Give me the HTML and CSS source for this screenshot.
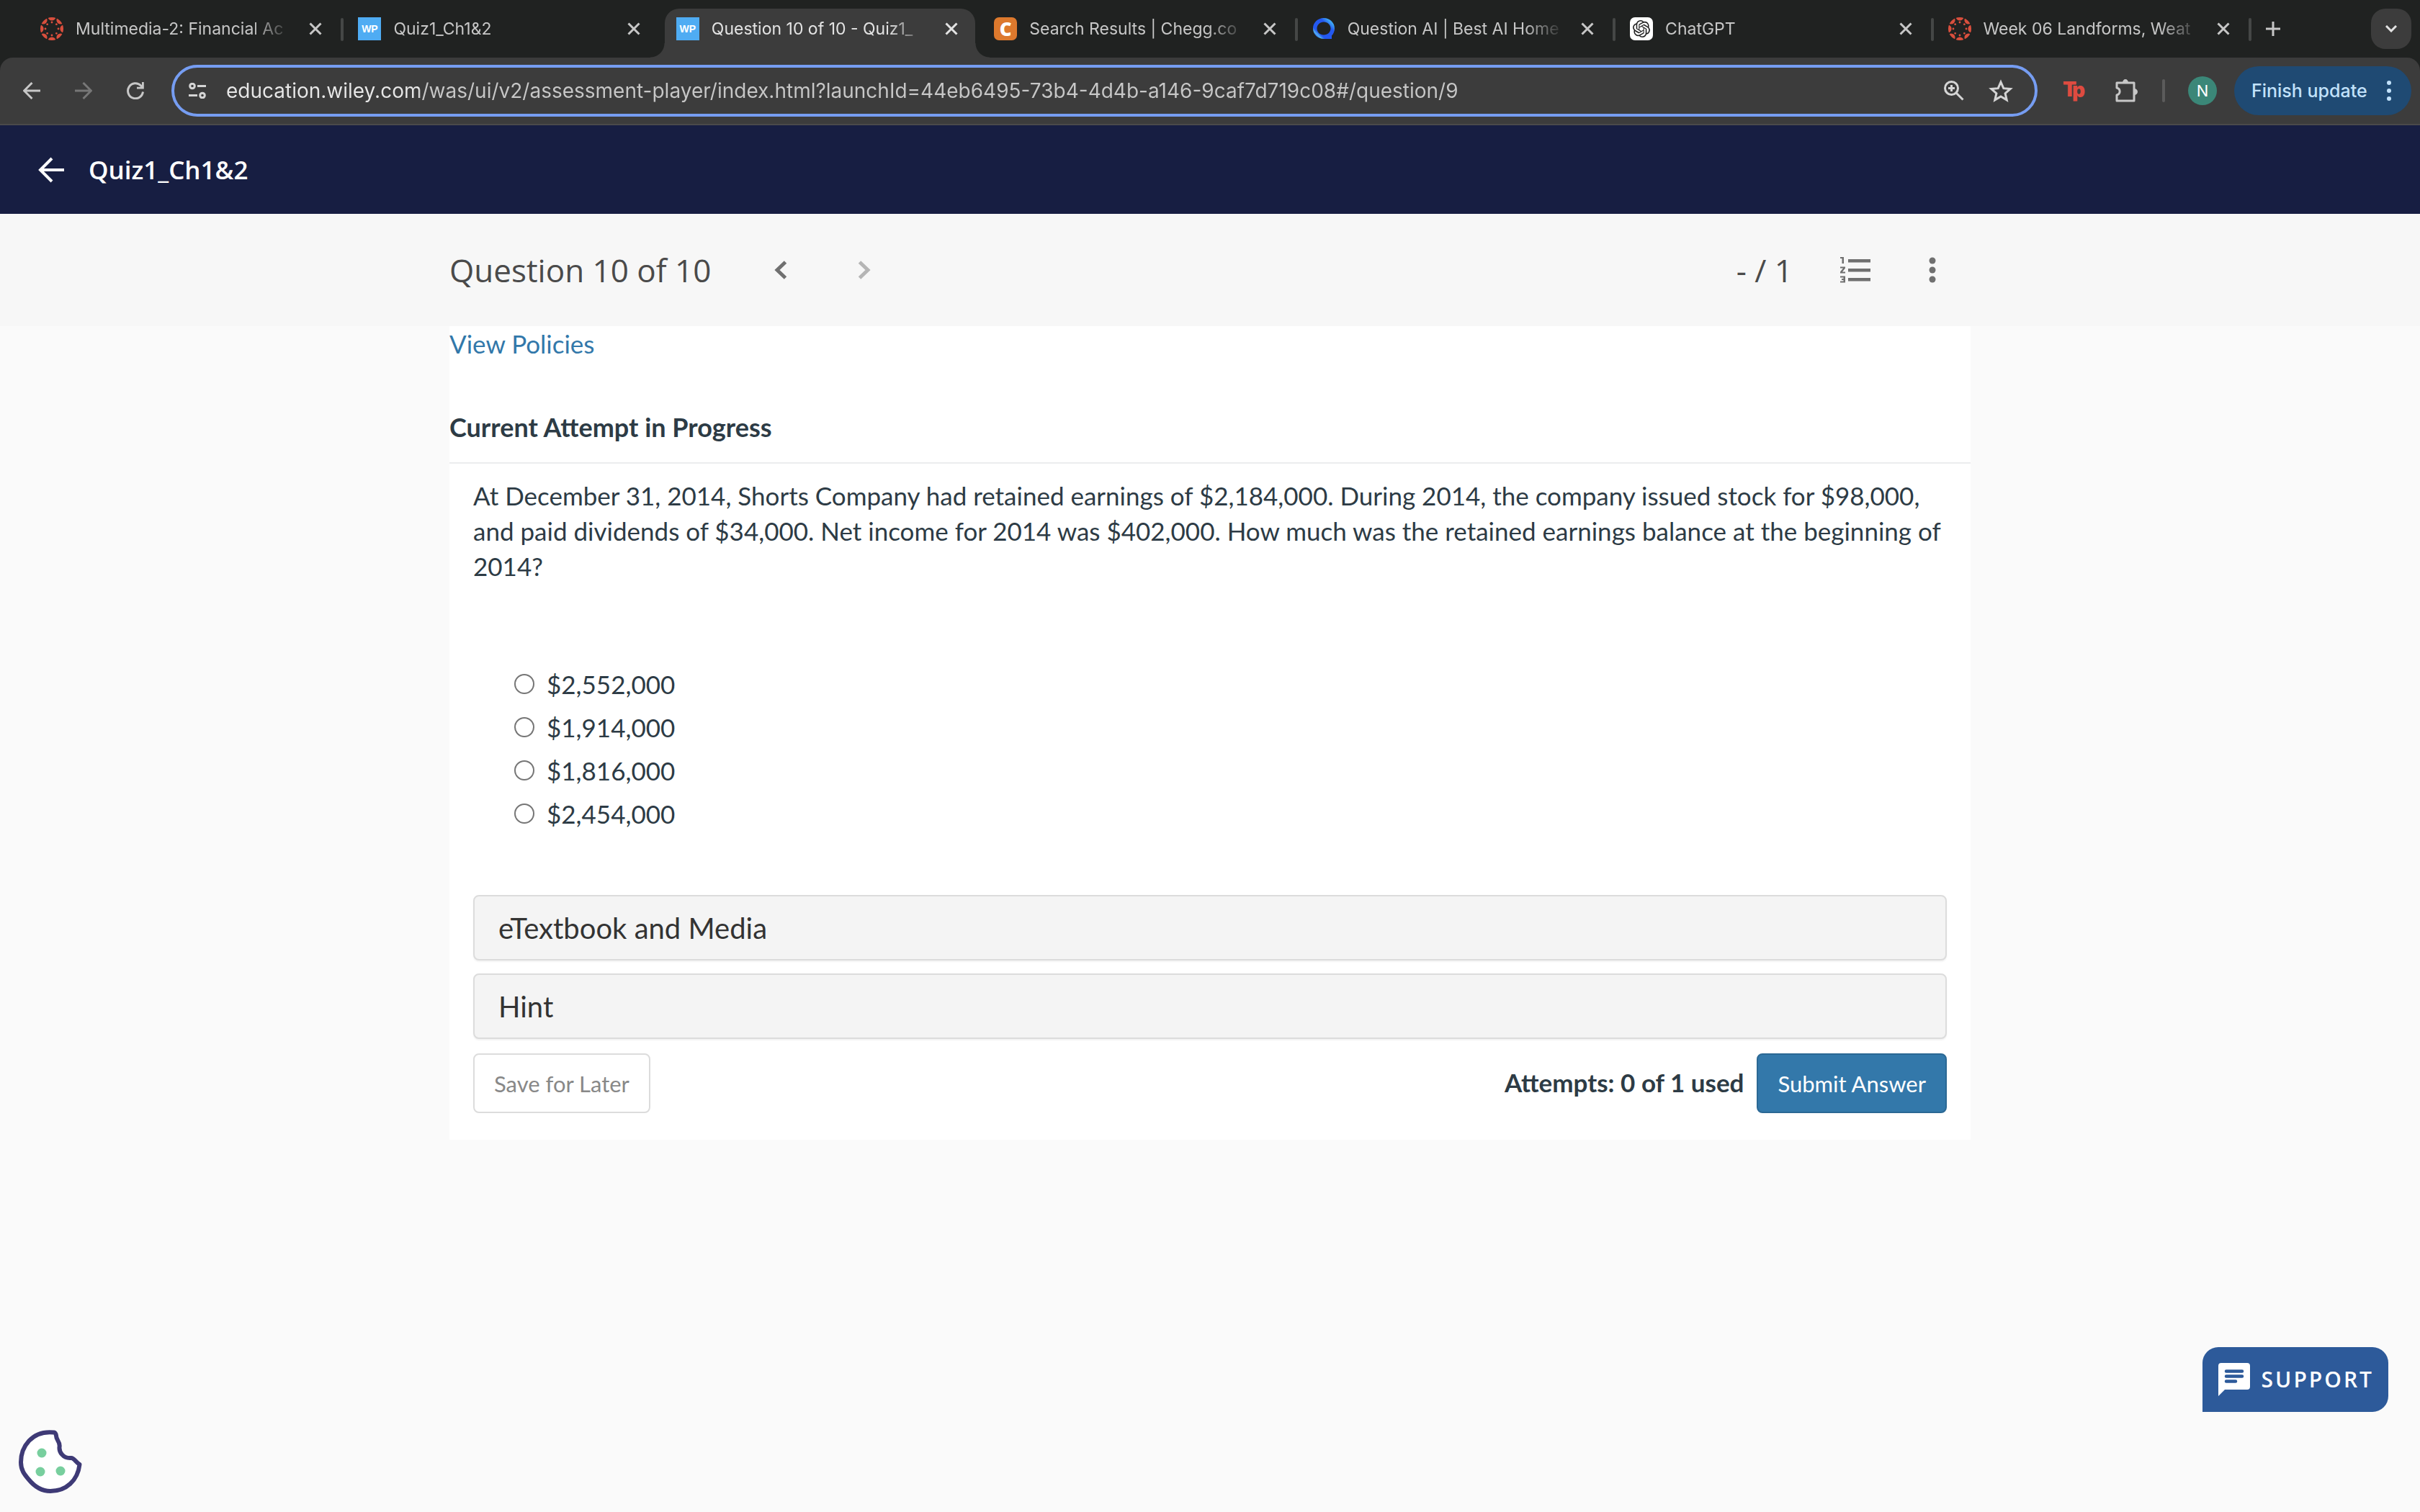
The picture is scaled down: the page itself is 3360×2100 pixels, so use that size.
FILE: index.html
```html
<!DOCTYPE html>
<html lang="en">
<head>
<meta charset="utf-8">
<meta name="viewport" content="width=device-width, initial-scale=1">
<title>Question 10 of 10 - Quiz1_Ch1&amp;2</title>
<link rel="stylesheet" href="styles.css">
</head>
<body>
<svg class="defs" aria-hidden="true">
  <defs>
    <clipPath id="disc"><circle cx="16" cy="16" r="16"/></clipPath>
    <g id="petal"><circle cx="16" cy="-1" r="5.6"/><circle cx="16" cy="7" r="1.4"/></g>
    <symbol id="canvas" viewBox="0 0 32 32">
      <g clip-path="url(#disc)" fill="#d94f3d">
        <use href="#petal"/><use href="#petal" transform="rotate(45 16 16)"/><use href="#petal" transform="rotate(90 16 16)"/><use href="#petal" transform="rotate(135 16 16)"/><use href="#petal" transform="rotate(180 16 16)"/><use href="#petal" transform="rotate(225 16 16)"/><use href="#petal" transform="rotate(270 16 16)"/><use href="#petal" transform="rotate(315 16 16)"/>
      </g>
    </symbol>
    <symbol id="close" viewBox="0 0 24 24"><path d="M4.500 4.500 19.500 19.500M19.500 4.500 4.500 19.500" stroke="currentColor" stroke-width="3" fill="none"/></symbol>
  </defs>
</svg>

<header class="browser">
  <div class="tabstrip">
    <div class="tabs">
      <div class="tab"><svg class="favicon"><use href="#canvas"/></svg><span class="tab-title">Multimedia-2: Financial Ac</span><button class="tab-close" aria-label="Close tab"><svg><use href="#close"/></svg></button></div>
      <div class="tab tab-plain"><span class="favicon favicon-wp">WP</span><span class="tab-title">Quiz1_Ch1&amp;2</span><button class="tab-close" aria-label="Close tab"><svg><use href="#close"/></svg></button></div>
      <div class="tab tab-active"><span class="favicon favicon-wp">WP</span><span class="tab-title">Question 10 of 10 - Quiz1_</span><button class="tab-close" aria-label="Close tab"><svg><use href="#close"/></svg></button></div>
      <div class="tab"><span class="favicon favicon-chegg">C</span><span class="tab-title">Search Results | Chegg.co</span><button class="tab-close" aria-label="Close tab"><svg><use href="#close"/></svg></button></div>
      <div class="tab"><svg class="favicon" viewBox="0 0 32 32"><defs><linearGradient id="qa" x1="0" y1="1" x2="1" y2="0"><stop offset="0" stop-color="#2458f0"/><stop offset=".12" stop-color="#2458f0"/><stop offset=".2" stop-color="#52b0ee"/><stop offset=".28" stop-color="#2458f0"/><stop offset=".66" stop-color="#2458f0"/><stop offset=".82" stop-color="#3fa9f5"/><stop offset="1" stop-color="#2458f0"/></linearGradient></defs><path fill="url(#qa)" fill-rule="evenodd" d="M16 1C7.500 1 1 7.500 1 15.500S7.500 30 16 30H27V25.500C29.500 23 31 19.500 31 15.500 31 7.500 24.500 1 16 1ZM16 6.500C21.500 6.500 25.500 10.500 25.500 15.500S21.500 24.500 16 24.500 6.500 20.500 6.500 15.500 10.500 6.500 16 6.500Z"/></svg><span class="tab-title">Question AI | Best AI Home</span><button class="tab-close" aria-label="Close tab"><svg><use href="#close"/></svg></button></div>
      <div class="tab"><svg class="favicon" viewBox="0 0 32 32"><rect width="32" height="32" rx="7" fill="#fff"/><path fill="#222" transform="translate(4 4)" d="M22.2819 9.8211a5.9847 5.9847 0 0 0-.5157-4.9108 6.0462 6.0462 0 0 0-6.5098-2.9A6.0651 6.0651 0 0 0 4.9807 4.1818a5.9847 5.9847 0 0 0-3.9977 2.9 6.0462 6.0462 0 0 0 .7427 7.0966 5.98 5.98 0 0 0 .511 4.9107 6.051 6.051 0 0 0 6.5146 2.9001A5.9847 5.9847 0 0 0 13.2599 24a6.0557 6.0557 0 0 0 5.7718-4.2058 5.9894 5.9894 0 0 0 3.9977-2.9001 6.0557 6.0557 0 0 0-.7475-7.0729zm-9.022 12.6081a4.4755 4.4755 0 0 1-2.8764-1.0408l.1419-.0804 4.7783-2.7582a.7948.7948 0 0 0 .3927-.6813v-6.7369l2.02 1.1686a.071.071 0 0 1 .038.052v5.5826a4.504 4.504 0 0 1-4.4945 4.4944zm-9.6607-4.1254a4.4708 4.4708 0 0 1-.5346-3.0137l.142.0852 4.783 2.7582a.7712.7712 0 0 0 .7806 0l5.8428-3.3685v2.3324a.0804.0804 0 0 1-.0332.0615L9.74 19.9502a4.4992 4.4992 0 0 1-6.1408-1.6464zM2.3408 7.8956a4.485 4.485 0 0 1 2.3655-1.9728V11.6a.7664.7664 0 0 0 .3879.6765l5.8144 3.3543-2.0201 1.1685a.0757.0757 0 0 1-.071 0l-4.8303-2.7865A4.504 4.504 0 0 1 2.3408 7.872zm16.5963 3.8558L13.1038 8.364 15.1192 7.2a.0757.0757 0 0 1 .071 0l4.8303 2.7913a4.4944 4.4944 0 0 1-.6765 8.1042v-5.6772a.79.79 0 0 0-.407-.667zm2.0107-3.0231l-.142-.0852-4.7735-2.7818a.7759.7759 0 0 0-.7854 0L9.409 9.2297V6.8974a.0662.0662 0 0 1 .0284-.0615l4.8303-2.7866a4.4992 4.4992 0 0 1 6.6802 4.66zM8.3065 12.863l-2.02-1.1638a.0804.0804 0 0 1-.038-.0567V6.0742a4.4992 4.4992 0 0 1 7.3757-3.4537l-.142.0805L8.704 5.459a.7948.7948 0 0 0-.3927.6813zm1.0976-2.3654l2.602-1.4998 2.6069 1.4998v2.9994l-2.5974 1.4997-2.6067-1.4997Z"/></svg><span class="tab-title">ChatGPT</span><button class="tab-close" aria-label="Close tab"><svg><use href="#close"/></svg></button></div>
      <div class="tab"><svg class="favicon"><use href="#canvas"/></svg><span class="tab-title">Week 06 Landforms, Weat</span><button class="tab-close" aria-label="Close tab"><svg><use href="#close"/></svg></button></div>
    </div>
    <button class="icon-button new-tab" aria-label="New tab"><svg width="20" height="20" viewBox="0 0 20 20"><path d="M10 0V20M0 10H20" stroke="currentColor" stroke-width="3"/></svg></button>
    <button class="icon-button tab-search" aria-label="Search tabs"><svg width="16" height="10" viewBox="0 0 16 10"><path d="M1 1 8 8 15 1" stroke="currentColor" stroke-width="3" fill="none"/></svg></button>
  </div>

  <div class="toolbar">
    <div class="nav-buttons">
      <button class="icon-button" aria-label="Back"><svg width="24" height="24" viewBox="0 0 24 24"><path d="M24 12H2M12.500 1 1.500 12 12.500 23" stroke="currentColor" stroke-width="3" fill="none"/></svg></button>
      <button class="icon-button dim" aria-label="Forward"><svg width="24" height="24" viewBox="0 0 24 24"><path d="M0 12H22M11.500 1 22.500 12 11.500 23" stroke="currentColor" stroke-width="3" fill="none"/></svg></button>
      <button class="icon-button" aria-label="Reload"><svg width="24" height="24" viewBox="0 0 24 24"><path d="M22.500 13.500A10.500 10.500 0 1 1 19.500 4.800L22 8" stroke="currentColor" stroke-width="3" fill="none"/><path d="M14 9.500H23.800V0H21V6.700H14Z" fill="currentColor"/></svg></button>
    </div>
    <div class="omnibox">
      <svg width="24" height="22" viewBox="0 0 24 22" aria-hidden="true"><g fill="none" stroke="currentColor" stroke-width="3"><circle cx="5" cy="4.500" r="3.300"/><path d="M12 4.500H24M0 17.500H12"/><circle cx="19" cy="17.500" r="3.300"/></g></svg>
      <input class="url" type="text" aria-label="Address" value="education.wiley.com/was/ui/v2/assessment-player/index.html?launchId=44eb6495-73b4-4d4b-a146-9caf7d719c08#/question/9">
      <button class="icon-button" aria-label="Zoom"><svg width="28" height="28" viewBox="0 0 28 28"><g fill="none" stroke="currentColor" stroke-width="3"><circle cx="10.500" cy="10.500" r="9"/><path d="M10.500 6V15M6 10.500H15M17 17 26.500 26.500"/></g></svg></button>
      <button class="icon-button" aria-label="Bookmark"><svg width="34" height="32" viewBox="0 0 34 32"><path d="M17 4 20.800 12.700 30.200 13.500 23.100 19.700 25.200 28.900 17 24 8.800 28.900 10.900 19.700 3.800 13.500 13.200 12.700Z" fill="none" stroke="currentColor" stroke-width="3"/></svg></button>
    </div>
    <div class="extensions">
      <button class="icon-button" aria-label="Tp extension"><svg width="32" height="32" viewBox="0 0 32 32" class="tp"><text x="0" y="24">T</text><text x="13" y="25">p</text></svg></button>
      <button class="icon-button" aria-label="Extensions"><svg width="32" height="34" viewBox="0 0 32 34"><path d="M2 6H26V31H2V23C7.500 21.500 7.500 14.500 2 13Z" fill="none" stroke="currentColor" stroke-width="3" stroke-linejoin="round"/><path d="M10 6A4 5 0 0 1 18 6ZM26 14A5 4.500 0 0 1 26 23Z" fill="currentColor"/></svg></button>
      <span class="divider"></span>
      <button class="avatar" aria-label="Profile">N</button>
      <button class="update"><span>Finish update</span><svg width="6" height="30" viewBox="0 0 6 30"><g fill="currentColor"><circle cx="3" cy="4" r="3"/><circle cx="3" cy="15" r="3"/><circle cx="3" cy="26" r="3"/></g></svg></button>
    </div>
  </div>
</header>

<div class="course-bar">
  <a class="course-back" href="#" aria-label="Back to course"><svg width="36" height="36" viewBox="0 0 36 36"><path d="M36 18H4M19 2 3 18 19 34" stroke="currentColor" stroke-width="4" fill="none"/></svg></a>
  <h1 class="course-title">Quiz1_Ch1&amp;2</h1>
</div>

<div class="question-bar">
  <div class="question-bar-inner">
    <h2 class="question-title">Question 10 of 10</h2>
    <button class="icon-button step" aria-label="Previous question"><svg width="18" height="26" viewBox="0 0 18 26"><path d="M15.500 2 4 13 15.500 24" stroke="currentColor" stroke-width="5" fill="none"/></svg></button>
    <button class="icon-button step step-off" aria-label="Next question"><svg width="18" height="26" viewBox="0 0 18 26"><path d="M2.500 2 14 13 2.500 24" stroke="currentColor" stroke-width="5" fill="none"/></svg></button>
    <span class="score">- / 1</span>
    <button class="icon-button list-button" aria-label="Question list"><svg width="44" height="36" viewBox="0 0 44 36"><path d="M12 3H43V7.500H12ZM12 16H43V20.500H12ZM12 29H43V33.500H12ZM1 0H6V9H3.500V2H1ZM1 13.500H8V15.500L4 20.500H8V22.500H1V20.500L5 15.500H1ZM1 26.500H8V35.500H1V33.500H5.500V32H3V30H5.500V28.500H1Z" fill="currentColor"/></svg></button>
    <button class="icon-button" aria-label="More options"><svg width="10" height="36" viewBox="0 0 10 36"><g fill="currentColor"><circle cx="5" cy="5" r="4.500"/><circle cx="5" cy="18" r="4.500"/><circle cx="5" cy="31" r="4.500"/></g></svg></button>
  </div>
</div>

<main class="card">
  <a class="policies" href="#">View Policies</a>
  <h3 class="attempt-title">Current Attempt in Progress</h3>
  <form class="question">
    <p class="prompt" id="prompt">At December 31, 2014, Shorts Company had retained earnings of $2,184,000. During 2014, the company issued stock for $98,000, and paid dividends of $34,000. Net income for 2014 was $402,000. How much was the retained earnings balance at the beginning of 2014?</p>
    <div class="choices" role="radiogroup" aria-labelledby="prompt">
      <label class="choice"><input type="radio" name="answer">$2,552,000</label>
      <label class="choice"><input type="radio" name="answer">$1,914,000</label>
      <label class="choice"><input type="radio" name="answer">$1,816,000</label>
      <label class="choice"><input type="radio" name="answer">$2,454,000</label>
    </div>
    <div class="resources">
      <button class="resource" type="button">eTextbook and Media</button>
      <button class="resource" type="button">Hint</button>
    </div>
    <div class="actions">
      <button class="action action-save" type="button">Save for Later</button>
      <span class="attempts">Attempts: 0 of 1 used</span>
      <button class="action action-submit" type="submit">Submit Answer</button>
    </div>
  </form>
</main>

<button class="support"><svg width="44" height="46" viewBox="0 0 44 46"><path fill="#fff" d="M4 0H40Q44 0 44 4V33Q44 37 40 37H9L0 46V4Q0 0 4 0Z"/><path d="M11 11.500H33M11 18.500H33M11 25.500H24" stroke="#2d5a9a" stroke-width="4.500" stroke-linecap="round"/></svg><span>SUPPORT</span></button>
<button class="cookie" aria-label="Cookie settings"><svg width="88" height="88" viewBox="0 0 88 88"><path d="M49 3.500C18 0 3 24 3 45 3 56 8 62 14 69 23 80 32 85 44 85 66 85 82 70 84.500 48 79 45 77 39 73 39 61 40 56 30 56.500 24 58 16 52 15 52 8 51.500 5 51 4 49 3.500Z" fill="#fff" stroke="#3e3a76" stroke-width="6" stroke-linejoin="round"/><g fill="#78cf9e"><circle cx="32" cy="32" r="6.500"/><circle cx="30" cy="58" r="6.500"/><circle cx="58" cy="57" r="6.500"/></g></svg></button>
</body>
</html>
```
FILE: styles.css
```css
* {
  box-sizing: border-box;
}

body {
  margin: 0;
  min-height: 100vh;
  background: #fafafa;
  color: #2d3b45;
  font: 35px/48px Lato, sans-serif;
}

button {
  margin: 0;
  padding: 0;
  border: 0;
  background: none;
  color: inherit;
  font: inherit;
  cursor: pointer;
}

h1, h2, h3, p {
  margin: 0;
}

svg {
  display: block;
  flex: none;
}

.defs {
  position: absolute;
  width: 0;
  height: 0;
}

.icon-button {
  display: flex;
  align-items: center;
  justify-content: center;
  flex: none;
}

/* Browser window */
.browser {
  background: #202221;
  color: #c7c7c7;
  font-family: Inter, sans-serif;
}

.tabstrip {
  display: flex;
  align-items: center;
  height: 80px;
  padding: 0 12px 0 40px;
}

.tabs {
  display: flex;
  flex: 1;
  align-self: stretch;
  padding-top: 12px;
}

.tab {
  position: relative;
  display: flex;
  align-items: center;
  flex: 1 1 0;
  min-width: 0;
  height: 68px;
  padding: 0 31px 12px 16px;
  font-size: 23px;
  line-height: 32px;
}

.tab::after {
  content: "";
  position: absolute;
  right: 4px;
  top: 13px;
  width: 4px;
  height: 32px;
  border-radius: 2px;
  background: #454746;
}

.tab-plain::after {
  display: none;
}

.tab-active {
  color: #e3e3e3;
}

.tab-active::before {
  content: "";
  position: absolute;
  inset: 0 10px 0 0;
  border-radius: 20px 20px 0 0;
  background: #3c3c3c;
}

/* Curved feet where the active tab meets the toolbar */
.tab-active::after {
  top: auto;
  bottom: 0;
  left: -20px;
  right: -10px;
  width: auto;
  height: 20px;
  border-radius: 0;
  background:
    radial-gradient(circle at 0 0, transparent 19px, #3c3c3c 20px) left / 20px 20px no-repeat,
    radial-gradient(circle at 100% 0, transparent 19px, #3c3c3c 20px) right / 20px 20px no-repeat;
}

.tab > * {
  position: relative;
}

.favicon {
  width: 32px;
  height: 32px;
  flex: none;
  text-align: center;
  color: #fff;
}

.favicon-wp {
  background: #4facf3;
  font: bold 14px/32px "Liberation Sans", sans-serif;
}

.favicon-chegg {
  border-radius: 7px;
  background: #dd792d;
  font: 800 26px/32px "Open Sans", sans-serif;
}

.tab-title {
  flex: 1;
  min-width: 0;
  margin: 0 20px 0 17px;
  white-space: nowrap;
  mask-image: linear-gradient(to left, transparent, #000 56px);
}

.tab-close svg {
  width: 24px;
  height: 24px;
}

.new-tab {
  width: 52px;
  height: 56px;
}

.tab-search {
  width: 56px;
  height: 56px;
  margin-left: 110px;
  border-radius: 20px;
  background: #3c3c3c;
  color: #e3e3e3;
}

.toolbar {
  display: flex;
  align-items: center;
  height: 94px;
  padding: 0 12px 0 32px;
  border-bottom: 2px solid #4a4a4a;
  border-radius: 18px 18px 0 0;
  background: #3c3c3c;
}

.nav-buttons {
  display: flex;
  gap: 48px;
  margin-right: 38px;
}

.dim {
  color: #777;
}

.omnibox {
  display: flex;
  align-items: center;
  flex: 1;
  gap: 34px;
  height: 72px;
  padding: 0 30px 0 20px;
  border: 4px solid #769df2;
  border-radius: 36px;
  color: #d5d5d5;
}

.url {
  flex: 1;
  min-width: 0;
  margin-left: -6px;
  padding: 0;
  border: 0;
  outline: 0;
  background: linear-gradient(to right, #e8e8e8 268px, #c7c7c7 268px);
  background-clip: text;
  color: transparent;
  font: 28px/40px Inter, sans-serif;
}

.extensions {
  display: flex;
  align-items: center;
  margin-left: 35px;
}

.extensions .icon-button {
  margin-right: 41px;
}

.extensions .icon-button + .divider {
  margin-left: -8px;
}

.tp text {
  fill: #de4b40;
  font: 900 28px Inter, sans-serif;
}

.divider {
  width: 4px;
  height: 32px;
  border-radius: 2px;
  background: #5b5b5b;
}

.avatar {
  width: 40px;
  height: 40px;
  margin: 0 24px 0 32px;
  border-radius: 50%;
  background: #3b8778;
  color: #fff;
  font-size: 22px;
  line-height: 40px;
}

.update {
  display: flex;
  align-items: center;
  justify-content: space-between;
  width: 246px;
  height: 68px;
  padding: 0 28px 0 24px;
  border-radius: 34px;
  background: #1f4a73;
  color: #c2e2fb;
  font-size: 25px;
  font-weight: 500;
  white-space: nowrap;
}

/* Course header */
.course-bar {
  display: flex;
  align-items: center;
  gap: 34px;
  height: 123px;
  padding: 0 53px;
  background: #171e42;
  color: #fff;
  font-family: "Open Sans", sans-serif;
}

.course-back {
  color: inherit;
}

.course-title {
  font-size: 35px;
  font-weight: 600;
  line-height: 48px;
}

/* Question navigation */
.question-bar {
  background: #f7f7f7;
  color: #707070;
  font-family: "Open Sans", sans-serif;
}

.question-bar-inner {
  display: flex;
  align-items: center;
  width: 100%;
  max-width: 2112px;
  height: 156px;
  margin: 0 auto;
  padding-right: 48px;
}

.question-title,
.score {
  color: #4a4a4a;
  font-size: 44px;
  font-weight: 400;
  line-height: 60px;
}

.step {
  margin-left: 88px;
}

.step-off {
  margin-left: 98px;
  color: #b5b5b5;
}

.score {
  margin-left: auto;
}

.list-button {
  margin: 0 80px 0 65px;
}

/* Question card */
.card {
  width: 100%;
  max-width: 2112px;
  margin: 0 auto;
  padding-bottom: 37px;
  background: #fff;
}

.policies {
  display: block;
  color: #3278aa;
  text-decoration: none;
}

.attempt-title {
  margin-top: 68px;
  padding-bottom: 25px;
  border-bottom: 2px solid #ebedee;
  font-size: 36px;
  font-weight: 700;
  line-height: 48px;
}

.question {
  padding: 20px 33px 0;
}

.prompt {
  line-height: 49px;
}

.choices {
  display: flex;
  flex-direction: column;
  align-items: flex-start;
  margin: 109px 0 83px 57px;
}

.choice {
  display: flex;
  align-items: center;
  gap: 17px;
  line-height: 60px;
}

.choice input {
  width: 28px;
  height: 28px;
  margin: 0;
  appearance: none;
  border: 2px solid #767676;
  border-radius: 50%;
  background: #fff;
}

.choice input:checked {
  border-width: 9px;
}

.resources {
  display: flex;
  flex-direction: column;
  gap: 18px;
}

.resource {
  height: 91px;
  padding: 0 33px;
  border: 2px solid #dcdcdc;
  border-radius: 8px;
  background: #f4f4f4;
  box-shadow: 0 2px 2px #0000000d;
  color: #333;
  font-size: 40px;
  text-align: left;
}

.actions {
  display: flex;
  align-items: baseline;
  margin-top: 20px;
}

.attempts {
  margin: 0 18px 0 auto;
  font-weight: 700;
}

.action {
  height: 83px;
  padding: 0 27px;
  border: 2px solid #dcdcdc;
  border-radius: 8px;
  font-size: 31px;
}

.action-save {
  color: #888;
}

.action-submit {
  border-color: #2b6894;
  background: #3378aa;
  color: #fff;
}

/* Floating controls */
.support {
  position: fixed;
  right: 44px;
  bottom: 139px;
  display: flex;
  align-items: center;
  gap: 16px;
  height: 90px;
  padding: 0 20px 0 22px;
  border-radius: 22px 22px 22px 0;
  background: #2d5a9a;
  color: #fff;
  font: 600 30px/40px "Open Sans", sans-serif;
  letter-spacing: 3px;
}

.cookie {
  position: fixed;
  left: 26px;
  bottom: 26px;
}
```
